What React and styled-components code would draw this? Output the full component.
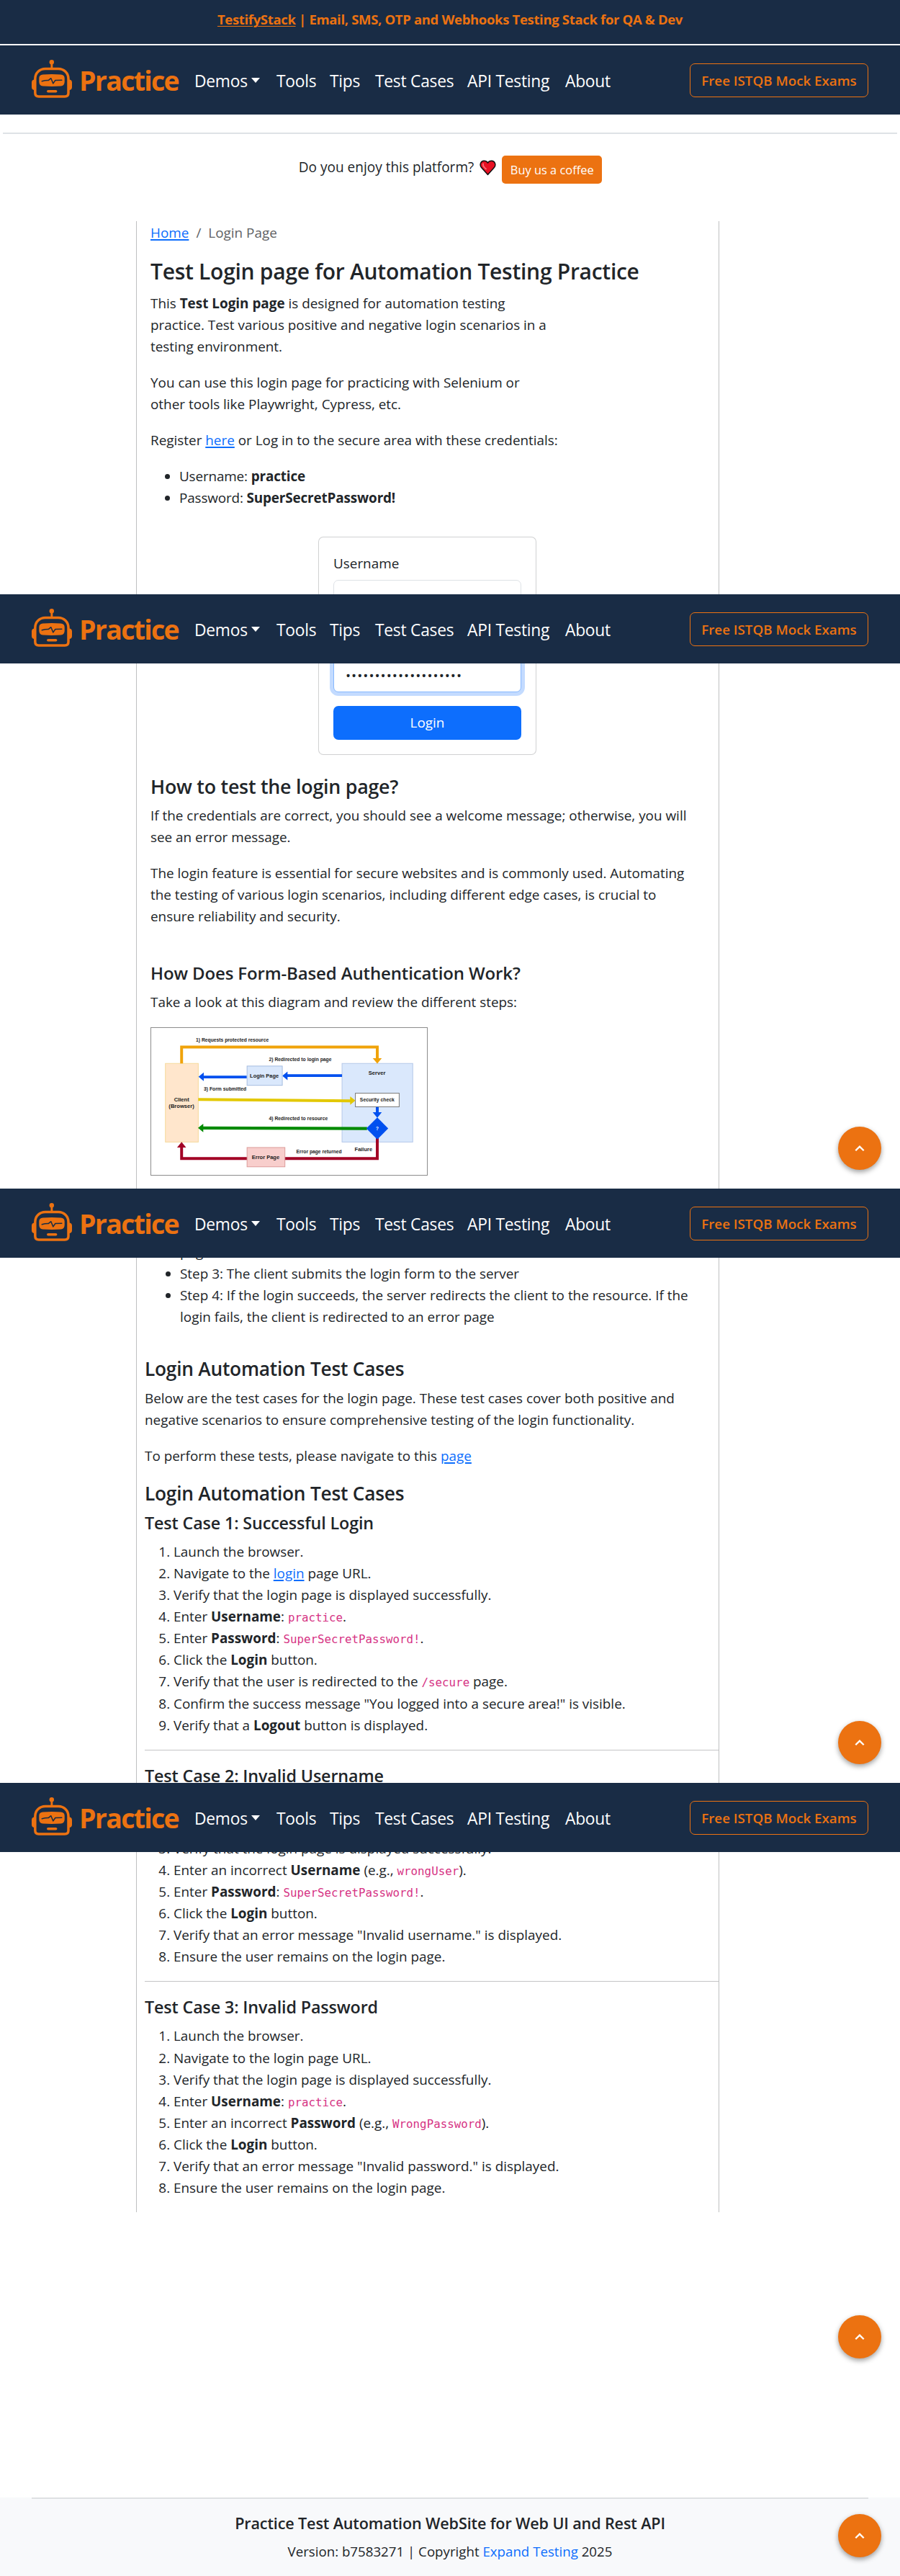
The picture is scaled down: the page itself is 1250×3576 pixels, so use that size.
import React from 'react';
import styled, { createGlobalStyle } from 'styled-components';

const navy = '#192c45';
const orange = '#ec7211';

const GlobalStyle = createGlobalStyle`
  * { box-sizing: border-box; }
  body {
    margin: 0;
    background: #fff;
    color: #212529;
    font: 400 18.9px/30px "Open Sans", "Noto Sans", sans-serif;
  }
`;

const Screen = styled.section`
  position: relative;
  display: flex;
  flex-direction: column;
  height: ${(p) => p.$height || 825}px;
  overflow: hidden;
`;

const Banner = styled.header`
  height: 63px;
  border-bottom: 2px solid #fff;
  padding-top: 13px;
  background: ${navy};
  background-clip: padding-box;
  color: ${orange};
  text-align: center;
  font-size: 18.5px;
  line-height: 28px;
  font-weight: 700;
  letter-spacing: -0.33px;
  a { color: inherit; text-underline-offset: 2px; text-decoration-thickness: 1px; }
`;

const NavBar = styled.nav`
  position: relative;
  z-index: 2;
  flex: none;
  display: flex;
  align-items: flex-start;
  height: 96px;
  padding: 20px 44px 0;
  background: ${navy};
`;

const Brand = styled.a`
  display: flex;
  width: 226px;
  gap: 10px;
  color: ${orange};
  font-size: 37.5px;
  font-weight: 700;
  line-height: 56px;
  letter-spacing: -1.7px;
  svg { flex: none; display: block; }
  span { margin-top: 1px; }
`;

const NavLinks = styled.div`
  display: flex;
  padding-top: 15px;
  color: #fff;
  font-size: 22.8px;
  line-height: 30px;
  letter-spacing: -0.25px;
`;

const NavLink = styled.a`
  display: flex;
  width: ${(p) => p.$width}px;
  white-space: nowrap;
`;

const Caret = styled.i`
  width: 0;
  height: 0;
  margin: 10px 0 0 5px;
  border: 6.5px solid transparent;
  border-top: 7px solid #fff;
  border-bottom: 0;
`;

const ExamButton = styled.a`
  width: 248px;
  height: 47px;
  margin: 5px 0 0 auto;
  border: 1px solid ${orange};
  border-radius: 7px;
  color: ${orange};
  font-size: 18.75px;
  font-weight: 600;
  line-height: 46px;
  text-align: center;
  white-space: nowrap;
`;

const TopRule = styled.hr`
  flex: none;
  width: 1242px;
  height: 2px;
  margin: 25px auto 30px;
  border: 0;
  background: #dee2e6;
`;

const Support = styled.div`
  display: flex;
  align-items: flex-start;
  justify-content: center;
  height: 39px;
  margin-bottom: 52px;
  padding-left: 1px;
  font-size: 19.050px;
  line-height: 33px;
  svg { margin: 6px 8px 0 8px; }
`;

const CoffeeButton = styled.a`
  width: 139px;
  height: 39px;
  border-radius: 5px;
  background: ${orange};
  color: #fff;
  font-size: 16.4px;
  line-height: 39px;
  text-align: center;
`;

const Column = styled.main`
  flex: ${(p) => (p.$end ? 'none' : 1)};
  width: 810px;
  min-height: 0;
  margin-left: 189px;
  padding-left: ${(p) => (p.$flush ? 11 : 19)}px;
  border: solid #bfc0c1;
  border-width: 0 1px;
  white-space: nowrap;
`;

const Breadcrumb = styled.div`
  display: flex;
  gap: 10px;
  margin: 1px 0 19px;
  color: #5f6265;
`;

const Link = styled.a`
  color: #0d6efd;
  text-decoration: ${(p) => (p.$plain ? 'none' : 'underline')};
  text-decoration-thickness: 2px;
  text-underline-offset: 2px;
`;

const PageTitle = styled.h1`
  margin: 0;
  padding: 1px 0 10px;
  font-size: 30px;
  font-weight: 600;
  line-height: 38px;
  letter-spacing: -0.28px;
`;

const Heading = styled.h2`
  margin: ${(p) => p.$top || 0}px 0 0;
  padding: 1px 0 9px;
  font-size: ${(p) => p.$size || 26.3}px;
  font-weight: 600;
  line-height: 33px;
  letter-spacing: -0.24px;
`;

const SubHeading = styled.h3`
  margin: ${(p) => p.$top || 0}px 0 10px;
  font-size: ${(p) => p.$size || 23.3}px;
  font-weight: 600;
  line-height: 30px;
  letter-spacing: -0.13px;
`;

const Text = styled.p`
  margin: 0 0 20px;
`;

const Bullets = styled.ul`
  margin: ${(p) => p.$top || 0}px 0 0;
  padding-left: ${(p) => p.$indent || 40}px;
  letter-spacing: ${(p) => p.$track || 0}px;
`;

const ContinuedItem = styled.li`
  list-style-type: none;
`;

const Steps = styled.ol`
  margin: ${(p) => p.$top || 0}px 0 0;
  padding-left: 40px;
  line-height: 30.08px;
`;

const Code = styled.code`
  color: #d63384;
  font: 15.8px "DejaVu Sans Mono", monospace;
`;

const Divider = styled.hr`
  height: 1px;
  margin: 19px 0 20px;
  border: 0;
  background: #c4c5c6;
`;

const ColumnEnd = styled.div`
  height: 19px;
`;

const LoginCard = styled.div`
  display: flow-root;
  width: 303px;
  margin-left: 233px;
  padding: 0 20px;
  border: 1px solid #d0d1d2;
  ${(p) =>
    p.$part === 'top'
      ? 'height: 90px; margin-top: 39px; padding-top: 21px; border-bottom: 0; border-radius: 7px 7px 0 0;'
      : 'height: 127px; border-top: 0; border-radius: 0 0 7px 7px;'}
`;

const Label = styled.label`
  display: block;
  margin-bottom: 8px;
`;

const Field = styled.input`
  display: block;
  width: 261px;
  height: 47px;
  padding: 0 16px;
  border: 1px solid #dee2e6;
  border-radius: 7px;
  outline: 0;
  color: #212529;
  font: 18.9px "Open Sans", sans-serif;
  ${(p) =>
    p.$active &&
    'margin-top: -7px; border-color: #86b7fe; box-shadow: 0 0 0 5px #c3dbff; letter-spacing: 1px;'}
`;

const LoginButton = styled.button`
  display: block;
  width: 261px;
  height: 47px;
  margin-top: 19px;
  border: 0;
  border-radius: 7px;
  background: #0d6efd;
  color: #fff;
  font: 18.9px/45px "Open Sans", sans-serif;
`;

const DiagramFrame = styled.svg`
  display: block;
  border: 1px solid #8c8c8c;
`;

const UpButton = styled.button`
  position: absolute;
  right: 26px;
  bottom: 26px;
  display: flex;
  align-items: center;
  justify-content: center;
  width: 60px;
  height: 60px;
  padding: 0;
  border: 0;
  border-radius: 50%;
  background: ${orange};
  box-shadow: 0 3px 7px rgba(0, 0, 0, 0.38);
`;

const Footer = styled.footer`
  height: 109px;
  margin-top: auto;
  padding: 0 44px;
  background: #f8f9fb;
  text-align: center;
`;

const FooterRule = styled.hr`
  height: 2px;
  margin: 0 0 19px;
  border: 0;
  background: #dee0e3;
`;

const FooterTitle = styled.h5`
  margin: 0 0 9px;
  font-size: 21.6px;
  font-weight: 600;
  line-height: 30px;
  letter-spacing: -0.14px;
`;

const FooterText = styled.p`
  margin: 0;
  font-size: 18.7px;
`;

const Robot = () => (
  <svg width="56" height="53" viewBox="0 0 56 53" fill={orange}>
    <circle cx="27.8" cy="3.2" r="3.2" />
    <rect x="26.4" y="4" width="2.9" height="8" />
    <path
      d="M19 12.4h18c8 0 14 6 14 14V46c0 3.200-2 5-5 5H9.800c-3 0-5-1.800-5-5V26.400c0-8 6-14 14.200-14z"
      fill="none"
      stroke={orange}
      strokeWidth="3.500"
    />
    <path d="M4 27.500c-2.500 0-4 1.500-4 4v6.500c0 2.500 1.500 4 4 4zM52 27.500c2.500 0 4 1.500 4 4v6.500c0 2.500-1.500 4-4 4z" />
    <path d="M15.500 20.500c8-.7 17-.7 25 0 3.500.3 5.200 2 5.200 5v5c0 3.500-1.700 5.700-5.200 6-8 .5-17 .5-25 0-3.500-.3-5.200-2.500-5.200-6v-5c0-3 1.700-4.700 5.200-5z" />
    <path
      d="M14.300 29.700c3-1 5.500-1.400 9.200-1.300l3.300-2.700 3 7.200 3-4.400 9-.3"
      fill="none"
      stroke={navy}
      strokeWidth="1.500"
      strokeLinecap="round"
      strokeLinejoin="round"
    />
    <rect x="21" y="42" width="14.400" height="3.600" rx="1.800" />
  </svg>
);

const Heart = () => (
  <svg width="23" height="22" viewBox="0 0 23 22">
    <path
      d="M11.500 20.500 2.600 10.600C-.5 6.500 1.800 1.300 6.200 1.300c2.300 0 4.200 1 5.300 2.800C12.600 2.300 14.500 1.300 16.800 1.300c4.400 0 6.700 5.200 3.600 9.300z"
      fill="#e81123"
      stroke="#111"
      strokeWidth="1.500"
      strokeLinejoin="round"
    />
    <path d="M5 5.500c-.6 2.500.8 4.500 4 7" fill="none" stroke="#f4707a" strokeWidth="1.900" strokeLinecap="round" />
  </svg>
);

const DiagramLabel = ({ x, y, w, size = 20, fill = '#222', children }) => (
  <text x={x} y={y} textLength={w} lengthAdjust="spacingAndGlyphs" fontSize={size} fill={fill}>
    {children}
  </text>
);

const Diagram = () => (
  <DiagramFrame width="385" height="206" viewBox="58 78 1153 617" fontFamily="Liberation Sans, Arial, sans-serif" fontWeight="700">
    <rect x="115" y="227" width="138" height="330" fill="#ffe6cc" stroke="#f5d99a" strokeWidth="3" />
    <rect x="857" y="227" width="297" height="330" fill="#dae8fc" stroke="#b5c8e8" strokeWidth="3" />
    <path d="M183 227V158H1005V207" fill="none" stroke="#f0a30a" strokeWidth="12" />
    <path d="M986 205h38l-19 23z" fill="#f0a30a" />
    <path d="M857 278H624M457 284H274" stroke="#0050ef" strokeWidth="12" />
    <path d="M606 279l22-18v36zM254 283l22-18v36z" fill="#0050ef" />
    <rect x="458" y="238" width="148" height="81" fill="#dae8fc" stroke="#a5bce0" strokeWidth="3" />
    <path d="M253 378L894 384" stroke="#e3c800" strokeWidth="12" />
    <path d="M913 383l-22-18v36z" fill="#e3c800" />
    <rect x="913" y="352" width="184" height="57" fill="#fff" stroke="#777" strokeWidth="3" />
    <path d="M1005 410v25" stroke="#0050ef" strokeWidth="12" />
    <path d="M986 432h38l-19 23z" fill="#0050ef" />
    <path d="M962 500L272 498" stroke="#008a00" strokeWidth="13" />
    <path d="M252 498l22-18v36z" fill="#008a00" />
    <path d="M1005 540V626H183V578" fill="none" stroke="#a20025" strokeWidth="12" />
    <path d="M164 580h38l-19-23z" fill="#a20025" />
    <path d="M1005 454l46 46-46 46-46-46z" fill="#0050ef" />
    <rect x="458" y="580" width="159" height="81" fill="#f8cecc" stroke="#dc9a98" strokeWidth="3" />
    <DiagramLabel x={243} y={136} w={306}>1) Requests protected resource</DiagramLabel>
    <DiagramLabel x={550} y={216} w={263}>2) Redirected to login page</DiagramLabel>
    <DiagramLabel x={276} y={341} w={179}>3) Form submitted</DiagramLabel>
    <DiagramLabel x={550} y={466} w={247}>4) Redirected to resource</DiagramLabel>
    <DiagramLabel x={470} y={287} w={121} size={23}>Login Page</DiagramLabel>
    <DiagramLabel x={968} y={275} w={72} size={22}>Server</DiagramLabel>
    <DiagramLabel x={932} y={387} w={145} size={21}>Security check</DiagramLabel>
    <DiagramLabel x={151} y={387} w={64} size={23}>Client</DiagramLabel>
    <DiagramLabel x={129} y={414} w={107} size={23}>(Browser)</DiagramLabel>
    <DiagramLabel x={478} y={629} w={116} size={23}>Error Page</DiagramLabel>
    <DiagramLabel x={665} y={603} w={191}>Error page returned</DiagramLabel>
    <DiagramLabel x={910} y={594} w={74} size={22}>Failure</DiagramLabel>
    <DiagramLabel x={999} y={508} w={12} fill="#fff">?</DiagramLabel>
  </DiagramFrame>
);

const links = [
  ['Tools', 74],
  ['Tips', 63],
  ['Test Cases', 128],
  ['API Testing', 136],
  ['About', 70],
];

const Nav = () => (
  <NavBar>
    <Brand>
      <Robot />
      <span>Practice</span>
    </Brand>
    <NavLinks>
      <NavLink $width={114}>
        Demos
        <Caret />
      </NavLink>
      {links.map(([name, width]) => (
        <NavLink key={name} $width={width}>
          {name}
        </NavLink>
      ))}
    </NavLinks>
    <ExamButton>Free ISTQB Mock Exams</ExamButton>
  </NavBar>
);

const BackToTop = () => (
  <UpButton aria-label="Back to top">
    <svg width="14" height="10" viewBox="0 0 14 10">
      <path d="M1.300 8.200 7 2.600l5.700 5.600" fill="none" stroke="#fff" strokeWidth="2.300" />
    </svg>
  </UpButton>
);

export default function App() {
  return (
    <>
      <GlobalStyle />
      <Screen>
        <Banner>
          <a href="#stack">TestifyStack</a> | Email, SMS, OTP and Webhooks Testing Stack for QA &amp; Dev
        </Banner>
        <Nav />
        <TopRule />
        <Support>
          <span>Do you enjoy this platform?</span>
          <Heart />
          <CoffeeButton>Buy us a coffee</CoffeeButton>
        </Support>
        <Column>
          <Breadcrumb>
            <Link href="#home">Home</Link>
            <span>/</span>
            <span>Login Page</span>
          </Breadcrumb>
          <PageTitle>Test Login page for Automation Testing Practice</PageTitle>
          <Text>
            This <b>Test Login page</b> is designed for automation testing
            <br />
            practice. Test various positive and negative login scenarios in a
            <br />
            testing environment.
          </Text>
          <Text>
            You can use this login page for practicing with Selenium or
            <br />
            other tools like Playwright, Cypress, etc.
          </Text>
          <Text>
            Register <Link href="#register">here</Link> or Log in to the secure area with these credentials:
          </Text>
          <Bullets $track={-0.15}>
            <li>Username: <b>practice</b></li>
            <li>Password: <b>SuperSecretPassword!</b></li>
          </Bullets>
          <LoginCard $part="top">
            <Label>Username</Label>
            <Field readOnly />
          </LoginCard>
        </Column>
      </Screen>

      <Screen>
        <Nav />
        <Column>
          <LoginCard $part="bottom">
            <Field $active type="password" readOnly value="SuperSecretPassword!" />
            <LoginButton>Login</LoginButton>
          </LoginCard>
          <Heading $top={26} $size={26.8}>How to test the login page?</Heading>
          <Text>
            If the credentials are correct, you should see a welcome message; otherwise, you will
            <br />
            see an error message.
          </Text>
          <Text>
            The login feature is essential for secure websites and is commonly used. Automating
            <br />
            the testing of various login scenarios, including different edge cases, is crucial to
            <br />
            ensure reliability and security.
          </Text>
          <SubHeading $top={49} $size={24}>How Does Form-Based Authentication Work?</SubHeading>
          <Text>Take a look at this diagram and review the different steps:</Text>
          <Diagram />
        </Column>
        <BackToTop />
      </Screen>

      <Screen>
        <Nav />
        <Column $flush>
          <Bullets $top={-23} $indent={49}>
            <ContinuedItem>page</ContinuedItem>
            <li>Step 3: The client submits the login form to the server</li>
            <li>
              Step 4: If the login succeeds, the server redirects the client to the resource. If the
              <br />
              login fails, the client is redirected to an error page
            </li>
          </Bullets>
          <Heading $top={40}>Login Automation Test Cases</Heading>
          <Text>
            Below are the test cases for the login page. These test cases cover both positive and
            <br />
            negative scenarios to ensure comprehensive testing of the login functionality.
          </Text>
          <Text>
            To perform these tests, please navigate to this <Link href="#page">page</Link>
          </Text>
          <Heading>Login Automation Test Cases</Heading>
          <SubHeading>Test Case 1: Successful Login</SubHeading>
          <Steps>
            <li>Launch the browser.</li>
            <li>Navigate to the <Link href="#login">login</Link> page URL.</li>
            <li>Verify that the login page is displayed successfully.</li>
            <li>Enter <b>Username</b>: <Code>practice</Code>.</li>
            <li>Enter <b>Password</b>: <Code>SuperSecretPassword!</Code>.</li>
            <li>Click the <b>Login</b> button.</li>
            <li>Verify that the user is redirected to the <Code>/secure</Code> page.</li>
            <li>Confirm the success message "You logged into a secure area!" is visible.</li>
            <li>Verify that a <b>Logout</b> button is displayed.</li>
          </Steps>
          <Divider />
          <SubHeading>Test Case 2: Invalid Username</SubHeading>
        </Column>
        <BackToTop />
      </Screen>

      <Screen>
        <Nav />
        <Column $flush $end>
          <Steps start={3} $top={-20}>
            <li>Verify that the login page is displayed successfully.</li>
            <li>Enter an incorrect <b>Username</b> (e.g., <Code>wrongUser</Code>).</li>
            <li>Enter <b>Password</b>: <Code>SuperSecretPassword!</Code>.</li>
            <li>Click the <b>Login</b> button.</li>
            <li>Verify that an error message "Invalid username." is displayed.</li>
            <li>Ensure the user remains on the login page.</li>
          </Steps>
          <Divider />
          <SubHeading>Test Case 3: Invalid Password</SubHeading>
          <Steps>
            <li>Launch the browser.</li>
            <li>Navigate to the login page URL.</li>
            <li>Verify that the login page is displayed successfully.</li>
            <li>Enter <b>Username</b>: <Code>practice</Code>.</li>
            <li>Enter an incorrect <b>Password</b> (e.g., <Code>WrongPassword</Code>).</li>
            <li>Click the <b>Login</b> button.</li>
            <li>Verify that an error message "Invalid password." is displayed.</li>
            <li>Ensure the user remains on the login page.</li>
          </Steps>
          <ColumnEnd />
        </Column>
        <BackToTop />
      </Screen>

      <Screen $height={276}>
        <Footer>
          <FooterRule />
          <FooterTitle>Practice Test Automation WebSite for Web UI and Rest API</FooterTitle>
          <FooterText>
            Version: b7583271 | Copyright <Link $plain href="#expand">Expand Testing</Link> 2025
          </FooterText>
        </Footer>
        <BackToTop />
      </Screen>
    </>
  );
}
